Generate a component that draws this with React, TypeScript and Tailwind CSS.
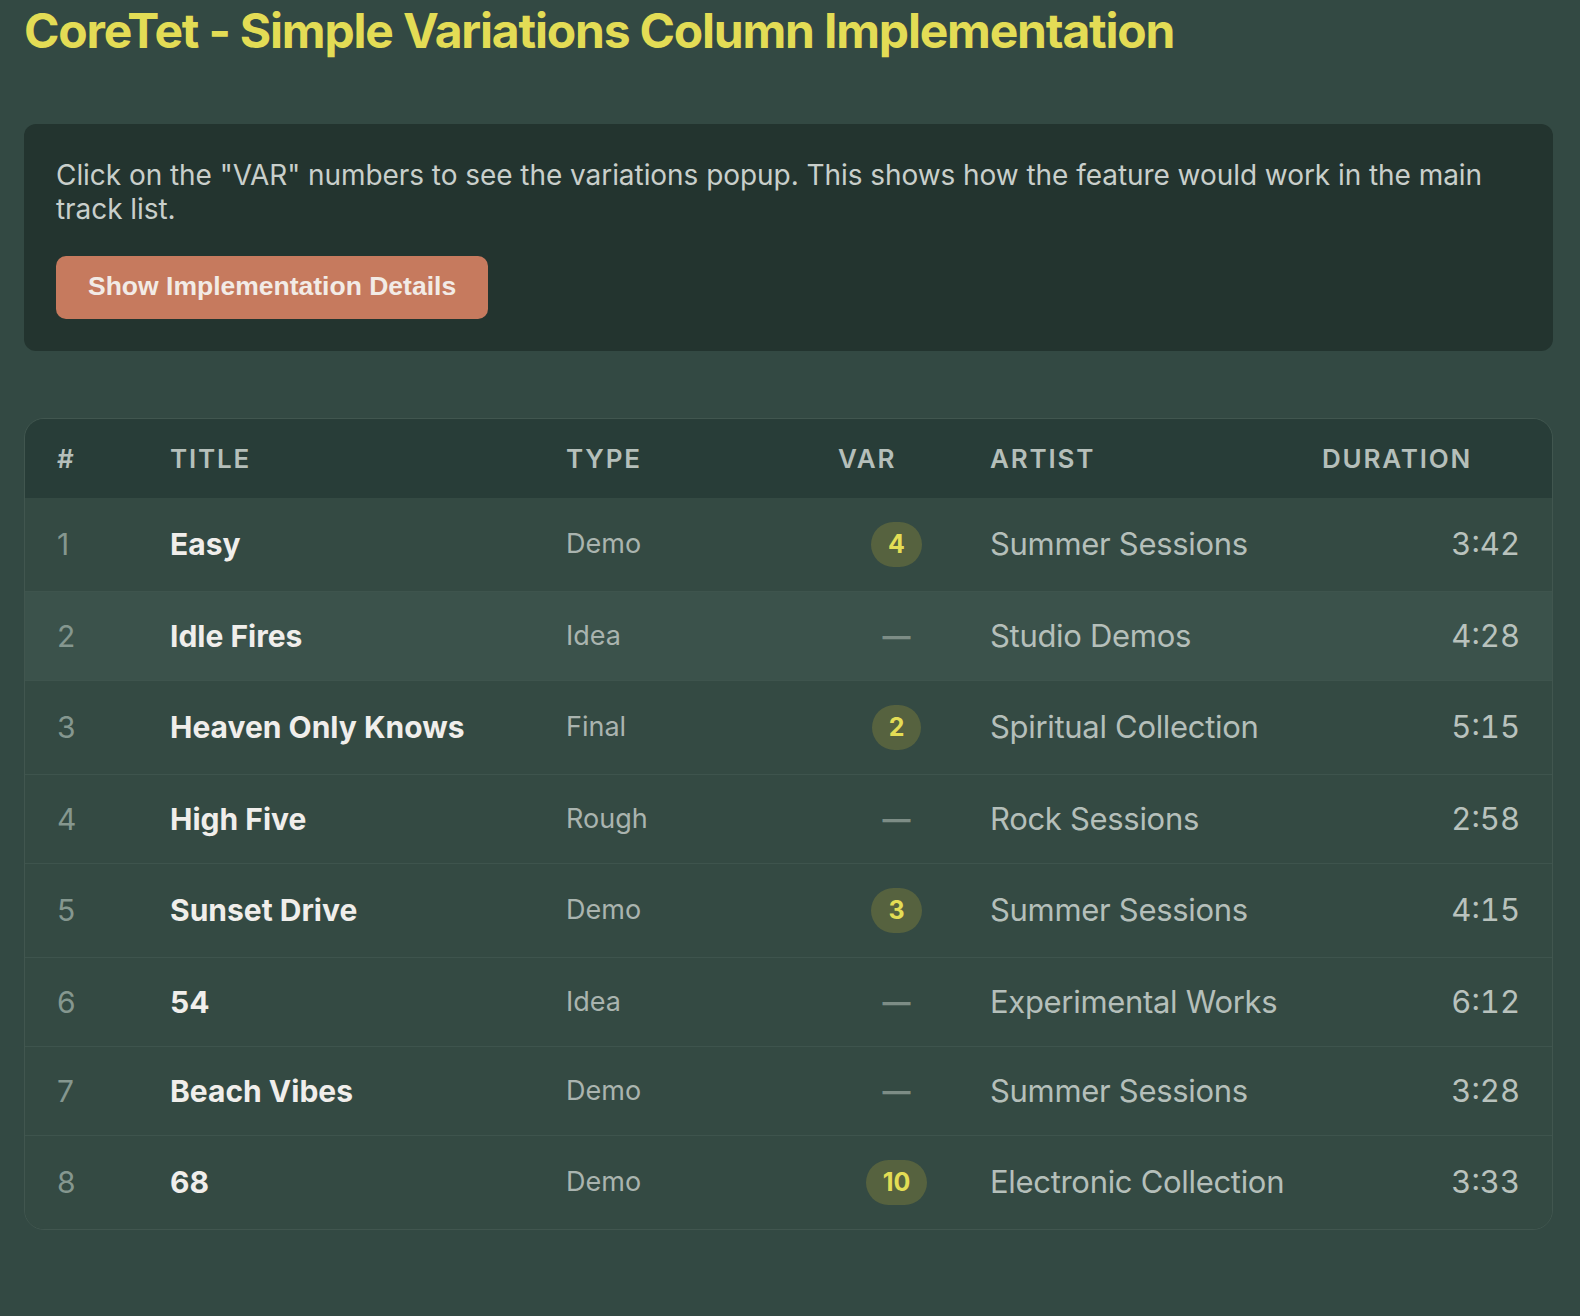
import React from "react";

type Track = {
  n: number;
  title: string;
  type: string;
  vars: number | null;
  artist: string;
  duration: string;
  hover?: boolean;
};

const TRACKS: Track[] = [
  { n: 1, title: "Easy", type: "Demo", vars: 4, artist: "Summer Sessions", duration: "3:42" },
  { n: 2, title: "Idle Fires", type: "Idea", vars: null, artist: "Studio Demos", duration: "4:28", hover: true },
  { n: 3, title: "Heaven Only Knows", type: "Final", vars: 2, artist: "Spiritual Collection", duration: "5:15" },
  { n: 4, title: "High Five", type: "Rough", vars: null, artist: "Rock Sessions", duration: "2:58" },
  { n: 5, title: "Sunset Drive", type: "Demo", vars: 3, artist: "Summer Sessions", duration: "4:15" },
  { n: 6, title: "54", type: "Idea", vars: null, artist: "Experimental Works", duration: "6:12" },
  { n: 7, title: "Beach Vibes", type: "Demo", vars: null, artist: "Summer Sessions", duration: "3:28" },
  { n: 8, title: "68", type: "Demo", vars: 10, artist: "Electronic Collection", duration: "3:33" },
];

const COLS = "grid grid-cols-[113px_396px_272px_152px_332px_1fr] items-center";

export default function App() {
  return (
    <div className="min-h-screen bg-[#334943] pl-6 pr-[27px] pt-[2px] pb-20 font-['Inter',sans-serif]">
      <h1 className="text-[48px] leading-[1.2] font-bold text-[#e3dc55] tracking-[-0.025em]">
        CoreTet - Simple Variations Column Implementation
      </h1>

      {/* Info card */}
      <div className="mt-16 rounded-xl bg-[#23342f] px-8 pt-[34px] pb-8">
        <p className="text-[28px] leading-[34px] tracking-[-0.002em] text-[#c9cfcb]">
          Click on the "VAR" numbers to see the variations popup. This shows how the feature would work in the main
          track list.
        </p>
        <button className="mt-[30px] h-[63px] rounded-[10px] bg-[#c67a5e] px-8 font-['Liberation_Sans',sans-serif] text-[26.5px] font-bold text-[#f2ebe6]">
          Show Implementation Details
        </button>
      </div>

      {/* Track table */}
      <div className="mt-[67px] overflow-hidden rounded-[20px] border border-[#41564f]">
        <div className={`${COLS} h-[79px] bg-[#283d38] text-[26px] font-semibold uppercase tracking-[0.07em] text-[#b5bfba]`}>
          <div className="pl-8">#</div>
          <div className="pl-8">Title</div>
          <div className="pl-8">Type</div>
          <div className="pl-8">Var</div>
          <div className="pl-8">Artist</div>
          <div className="pl-8">Duration</div>
        </div>

        {TRACKS.map((t, i) => (
          <div
            key={t.n}
            className={`${COLS} py-6 leading-[40px] whitespace-nowrap ${t.hover ? "bg-[#3b524b]" : "bg-[#344a43]"} ${
              i < TRACKS.length - 1 ? "border-b border-[#3e544d]" : ""
            }`}
          >
            <div className="pl-8 text-[30px] text-[#85978f]">{t.n}</div>
            <div className="pl-8 text-[30px] font-bold text-[#f0eeeb]">{t.title}</div>
            <div className="pl-8 text-[27px] text-[#aab4af]">{t.type}</div>
            <div className="pl-8">
              <div className="flex w-[117px] justify-center">
                {t.vars !== null ? (
                  <span className="flex h-[45px] items-center rounded-full bg-[#56623f] px-[17px] text-[25px] font-bold text-[#e3dd55]">
                    {t.vars}
                  </span>
                ) : (
                  <span className="text-[28px] font-bold text-[#7d8d86]">—</span>
                )}
              </div>
            </div>
            <div className="pl-8 text-[31px] tracking-[-0.01em] text-[#b5bfba]">{t.artist}</div>
            <div className="pr-8 text-right text-[31px] tabular-nums text-[#b9c2bd]">{t.duration}</div>
          </div>
        ))}
      </div>
    </div>
  );
}
